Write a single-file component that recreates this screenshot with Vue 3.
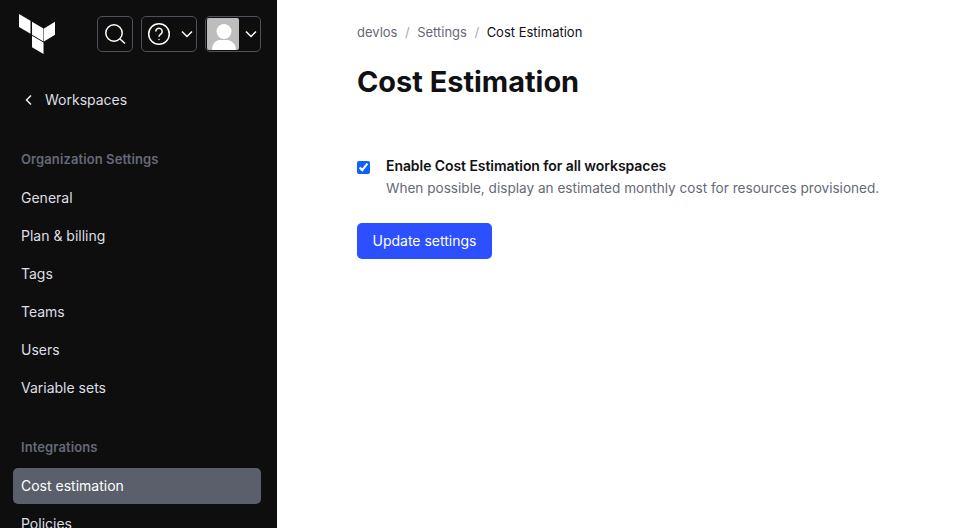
<script setup>
const groups = [
  { title: 'Organization Settings', items: ['General', 'Plan & billing', 'Tags', 'Teams', 'Users', 'Variable sets'] },
  { title: 'Integrations', items: ['Cost estimation', 'Policies'] }
]
</script>

<template>
  <div class="page">
    <aside class="side">
      <header class="top">
        <svg class="logo" width="36" height="40" viewBox="19 14 36 40" aria-label="Terraform">
          <path d="M19 14l11.500 6.700v13L19 27zM32 21.700l11.500 6.700v13L32 34.700zM55 21.700l-11 6.700v13l11-6.700zM32 35.700l11.500 6.700V54L32 47.300z" fill="#fff" />
        </svg>
        <div class="tools">
          <button class="tool square" aria-label="Search">
            <svg width="24" height="24" viewBox="0 0 24 24" fill="none" stroke="#fff" stroke-width="1.500">
              <circle cx="11" cy="11" r="8.200" />
              <path d="M17 17L22 21.500" />
            </svg>
          </button>
          <button class="tool wide" aria-label="Help">
            <svg width="24" height="24" viewBox="0 0 24 24" fill="none" stroke="#fff" stroke-width="1.500">
              <circle cx="12" cy="12" r="10.300" />
              <path d="M8.800 9.500a3.200 3.200 0 1 1 5 2.600c-1.100.8-1.800 1.300-1.800 2.700" />
              <circle cx="12" cy="17.500" r=".7" fill="#fff" stroke="none" />
            </svg>
            <svg class="chev" width="12" height="12" viewBox="0 0 12 12" fill="none" stroke="#fff" stroke-width="1.500">
              <path d="M1 3.500l5 5 5-5" />
            </svg>
          </button>
          <button class="tool wide user" aria-label="Account">
            <svg class="avatar" width="32" height="32" viewBox="0 0 32 32">
              <rect width="32" height="32" rx="2" fill="#bdbdbd" />
              <circle cx="17" cy="13.500" r="7.500" fill="#fff" />
              <path d="M5 32c0-6 3-9 7-10h9c4 1 8 4 8 10z" fill="#fff" />
            </svg>
            <svg class="chev" width="12" height="12" viewBox="0 0 12 12" fill="none" stroke="#fff" stroke-width="1.500">
              <path d="M1 3.500l5 5 5-5" />
            </svg>
          </button>
        </div>
      </header>

      <a class="back">
        <svg width="16" height="16" viewBox="0 0 16 16" fill="none" stroke="#efeff1" stroke-width="1.500">
          <path d="M10 3.500L5.500 8l4.500 4.500" />
        </svg>
        <span>Workspaces</span>
      </a>

      <nav class="nav">
        <section v-for="g in groups" :key="g.title" class="group">
          <h2 class="group-title">{{ g.title }}</h2>
          <a v-for="item in g.items" :key="item" class="item" :class="{ active: item === 'Cost estimation' }">{{ item }}</a>
        </section>
      </nav>
    </aside>

    <main class="main">
      <ol class="crumbs">
        <li>devlos</li>
        <li class="sep">/</li>
        <li>Settings</li>
        <li class="sep">/</li>
        <li class="current">Cost Estimation</li>
      </ol>
      <h1 class="title">Cost Estimation</h1>
      <form class="form" @submit.prevent>
        <label class="check">
          <input type="checkbox" checked />
          <span class="check-text">
            <strong>Enable Cost Estimation for all workspaces</strong>
            <span class="help">When possible, display an estimated monthly cost for resources provisioned.</span>
          </span>
        </label>
        <button class="submit" type="submit">Update settings</button>
      </form>
    </main>
  </div>
</template>

<style>
html, body { margin: 0; height: 100%; overflow: hidden; background: #fff; }
</style>

<style scoped>
.page {
  display: flex;
  height: 528px;
  overflow: hidden;
  font-family: Inter, "Liberation Sans", sans-serif;
  font-size: 14px;
  color: #0c0c0e;
}
.side {
  width: 277px;
  flex: none;
  background: #0e0e0f;
  color: #dedfe3;
  box-sizing: border-box;
  padding: 14px 16px 0 13px;
  overflow: hidden;
}
.top {
  display: flex;
  justify-content: space-between;
  align-items: flex-start;
  padding-left: 6px;
}
.logo { display: block; }
.tools { display: flex; gap: 8px; margin-top: 2px; }
.tool {
  height: 36px;
  box-sizing: border-box;
  border: 1px solid #4f525c;
  border-radius: 5px;
  background: transparent;
  padding: 0;
  display: flex;
  align-items: center;
  justify-content: center;
}
.square { width: 36px; }
.wide { width: 56px; justify-content: flex-start; gap: 10px; padding-left: 5px; }
.user { padding-left: 1px; gap: 6px; }
.avatar { display: block; }
.back {
  display: flex;
  align-items: center;
  gap: 8px;
  margin: 18px 0 0 8px;
  height: 56px;
  line-height: 20px;
}
.nav { margin-top: 21px; }
.group { margin-bottom: 31px; }
.group-title {
  margin: 0 0 11px;
  padding-left: 8px;
  height: 20px;
  font-size: 13px;
  line-height: 20px;
  font-weight: 600;
  letter-spacing: 0.1px;
  color: #656a76;
}
.item {
  display: block;
  height: 36px;
  margin-bottom: 2px;
  padding-left: 8px;
  border-radius: 5px;
  line-height: 36px;
  color: #dedfe3;
}
.item.active { background: #5a5f6b; color: #fff; }
.main {
  flex: 1;
  min-width: 0;
  padding: 0 0 0 80px;
}
.crumbs {
  list-style: none;
  display: flex;
  gap: 7.500px;
  margin: 0;
  padding: 24px 0 0;
  font-size: 13px;
  line-height: 17px;
  color: #656a76;
}
.crumbs .sep { color: #a5a8b2; }
.crumbs .current { color: #111113; }
.title {
  margin: 23px 0 0;
  font-size: 28.900px;
  line-height: 36px;
  font-weight: 700;
  color: #111113;
}
.form { margin-top: 57px; }
.check { display: flex; align-items: flex-start; gap: 16px; }
.check input {
  width: 13px;
  height: 13px;
  margin: 4px 0 0;
  flex: none;
  accent-color: #1060ff;
}
.check-text { display: flex; flex-direction: column; gap: 2px; margin-top: -1px; line-height: 20px; }
.check-text strong { font-weight: 600; letter-spacing: -0.07px; color: #111113; }
.help { color: #656a76; font-size: 13.600px; }
.submit {
  display: block;
  margin-top: 25px;
  width: 135px;
  height: 36px;
  border: 0;
  border-radius: 5px;
  background: #2c4fff;
  color: #fff;
  font: 400 14px/20px Inter, "Liberation Sans", sans-serif;
}
</style>
